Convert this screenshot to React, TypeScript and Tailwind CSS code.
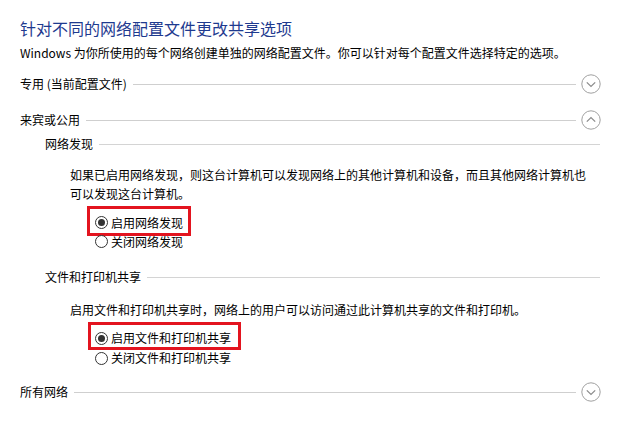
import React from 'react';

const font = 'font-["Microsoft_YaHei","Noto_Sans_CJK_SC",sans-serif]';

const Chevron: React.FC<{ up?: boolean }> = ({ up }) => (
  <svg width="20" height="20" viewBox="0 0 20 20" className="ml-[5px] shrink-0">
    <circle cx="10" cy="10" r="9.2" fill="none" stroke="#a0a0a0" strokeWidth="1" />
    <path
      d={up ? 'M5.8 11.6 L10 7.6 L14.2 11.6' : 'M5.8 8.4 L10 12.4 L14.2 8.4'}
      fill="none"
      stroke="#8c8c8c"
      strokeWidth="1.3"
    />
  </svg>
);

const ProfileRow: React.FC<{ label: string; up?: boolean; className?: string }> = ({ label, up, className }) => (
  <div className={`flex h-[20px] items-center pl-[20px] pr-[29px] ${className ?? ''}`}>
    <span className="text-[12px] leading-[16px] text-black whitespace-nowrap">{label}</span>
    <div className="ml-[6px] h-px flex-1 bg-[#cfcfcf]" />
    <Chevron up={up} />
  </div>
);

const GroupRow: React.FC<{ label: string; className?: string }> = ({ label, className }) => (
  <div className={`flex h-[16px] items-center pl-[45px] pr-[30px] ${className ?? ''}`}>
    <span className="text-[12px] leading-[16px] text-black whitespace-nowrap">{label}</span>
    <div className="ml-[6px] h-px flex-1 bg-[#d4d4d4]" />
  </div>
);

type RadioProps = {
  label: string;
  checked?: boolean;
  mark?: string;
  className?: string;
};

const Radio: React.FC<RadioProps> = ({ label, checked, mark, className }) => (
  <div className={`flex pl-[95px] ${className ?? ''}`}>
    <div className="relative flex items-center">
      <span className="flex h-[13px] w-[13px] items-center justify-center rounded-full border border-[#333] bg-white">
        {checked && <span className="h-[7px] w-[7px] rounded-full bg-[#333]" />}
      </span>
      <span className="ml-[3px] text-[12px] leading-[16px] text-black whitespace-nowrap">{label}</span>
      {mark && <span className={`absolute border-[3px] border-[#e3141f] ${mark}`} />}
    </div>
  </div>
);

export default function App() {
  return (
    <div className={`h-[428px] w-[630px] overflow-hidden bg-white ${font}`}>
      <div className="mt-[18px] h-[20px] pl-[20px] text-[16px] leading-[20px] text-[#1e3a8f]">
        针对不同的网络配置文件更改共享选项
      </div>
      <div className="mt-[7px] h-[16px] pl-[20px] text-[12px] leading-[16px] text-black whitespace-nowrap">
        Windows 为你所使用的每个网络创建单独的网络配置文件。你可以针对每个配置文件选择特定的选项。
      </div>

      <ProfileRow label="专用 (当前配置文件)" className="mt-[13px]" />
      <ProfileRow label="来宾或公用" up className="mt-[16px]" />

      <GroupRow label="网络发现" className="mt-[6px]" />
      <p className="mt-[13px] pl-[70px] text-[12px] leading-[19px] text-black whitespace-nowrap">
        如果已启用网络发现，则这台计算机可以发现网络上的其他计算机和设备，而且其他网络计算机也
        <br />
        可以发现这台计算机。
      </p>
      <Radio label="启用网络发现" checked className="mt-[10px] h-[19px]" mark="left-[-8px] top-[-7px] h-[30px] w-[104px]" />
      <Radio label="关闭网络发现" className="h-[19px]" />

      <GroupRow label="文件和打印机共享" className="mt-[18px]" />
      <p className="mt-[15px] pl-[70px] text-[12px] leading-[19px] text-black whitespace-nowrap">
        启用文件和打印机共享时，网络上的用户可以访问通过此计算机共享的文件和打印机。
      </p>
      <Radio label="启用文件和打印机共享" checked className="mt-[9px] h-[20px]" mark="left-[-7px] top-[-6px] h-[28px] w-[153px]" />
      <Radio label="关闭文件和打印机共享" className="h-[20px]" />

      <ProfileRow label="所有网络" className="mt-[14px]" />
    </div>
  );
}
